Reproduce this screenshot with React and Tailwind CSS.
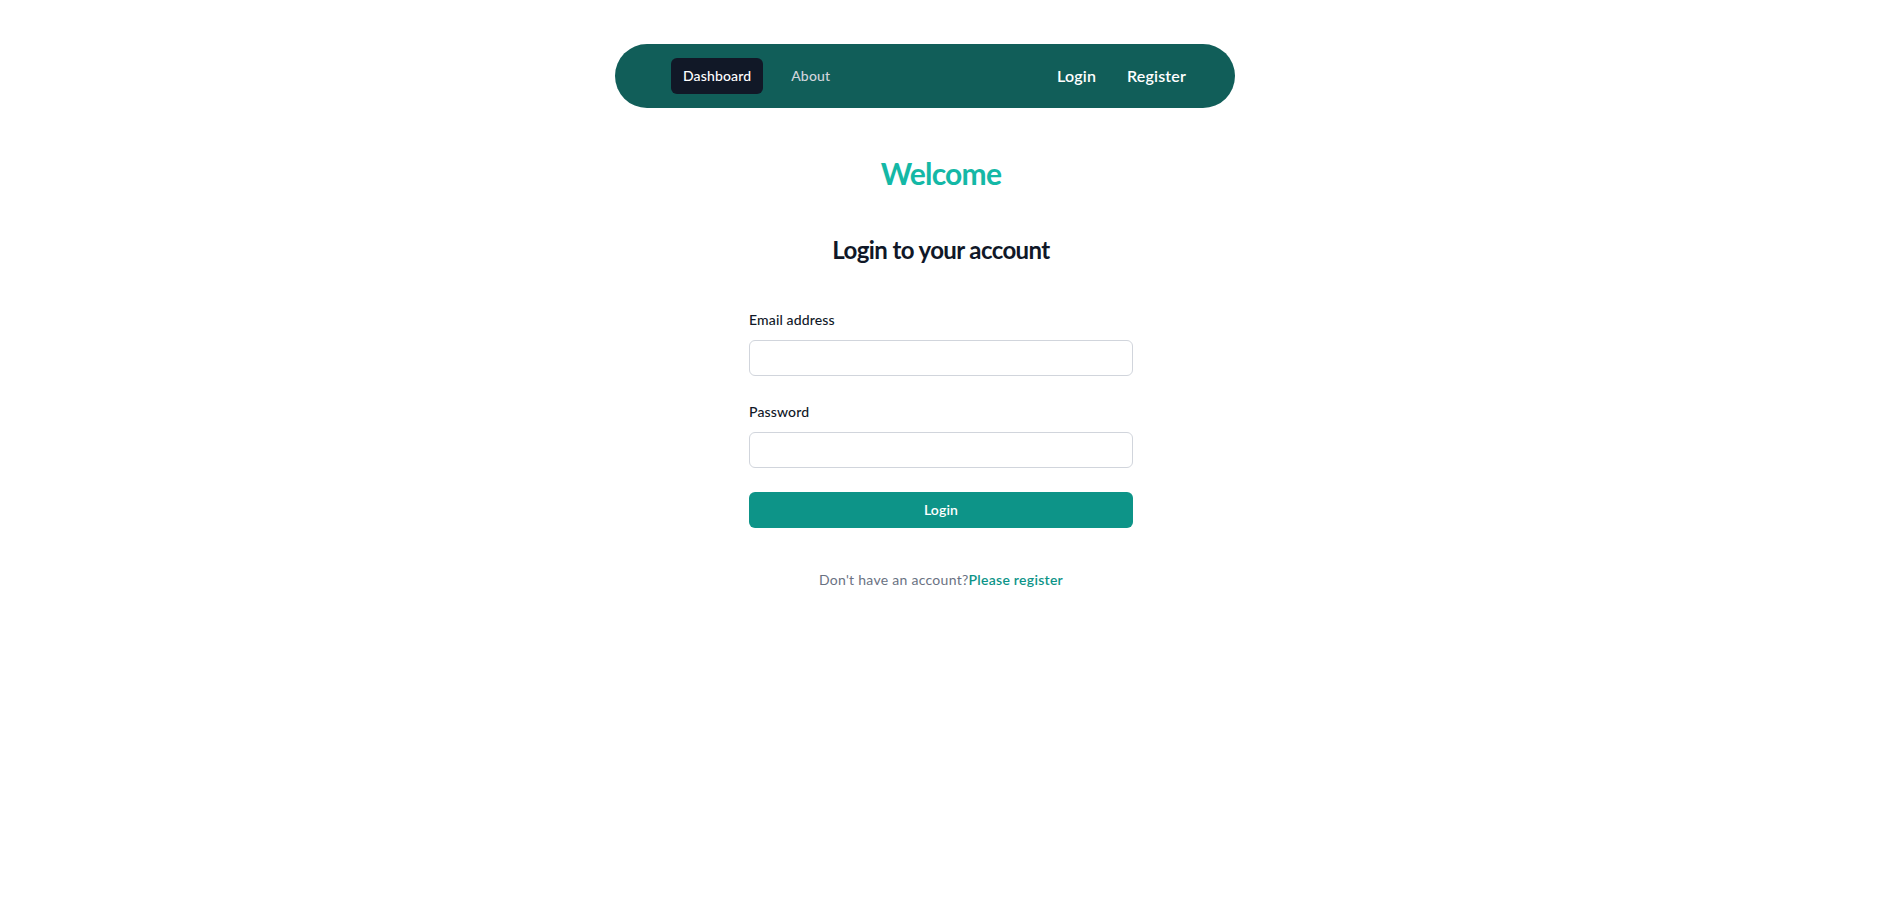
export default function App() {
  return (
    <div className="min-h-screen bg-white font-['Lato','Noto_Sans',sans-serif]">
      <div className="pt-[44px]">
        <nav className="ml-[615px] flex h-16 w-[620px] items-center justify-between rounded-full bg-[#115e59] pl-[56px] pr-[49px]">
          <div className="flex items-center gap-4">
            <a className="rounded-md bg-[#111827] px-3 py-2 text-sm font-medium leading-5 tracking-[0.01em] text-white">Dashboard</a>
            <a className="rounded-md px-3 py-2 text-sm font-medium leading-5 tracking-[0.01em] text-gray-300">About</a>
          </div>
          <div className="flex items-center gap-[31px]">
            <a className="text-base font-semibold tracking-[0.01em] text-white">Login</a>
            <a className="text-base font-semibold tracking-[0.01em] text-white">Register</a>
          </div>
        </nav>
      </div>
      <main className="pr-[5px]">
        <h1 className="mt-[47px] text-center text-3xl font-bold leading-9 tracking-tight text-[#14b8a6]">Welcome</h1>
        <h2 className="mt-[41px] text-center text-2xl font-bold leading-9 tracking-tight text-gray-900">
          Login to your account
        </h2>
        <div className="mx-auto mt-10 w-full max-w-sm">
          <form className="space-y-6" onSubmit={(e) => e.preventDefault()}>
            <div>
              <label className="block text-sm font-medium leading-6 tracking-[0.01em] text-gray-900">Email address</label>
              <div className="mt-2">
                <input
                  type="email"
                  className="block h-9 w-full rounded-md bg-white px-3 py-1.5 text-base text-gray-900 outline-1 -outline-offset-1 outline-gray-300"
                />
              </div>
            </div>
            <div>
              <label className="block text-sm font-medium leading-6 tracking-[0.01em] text-gray-900">Password</label>
              <div className="mt-2">
                <input
                  type="password"
                  className="block h-9 w-full rounded-md bg-white px-3 py-1.5 text-base text-gray-900 outline-1 -outline-offset-1 outline-gray-300"
                />
              </div>
            </div>
            <div>
              <button
                type="submit"
                className="flex h-9 w-full items-center justify-center rounded-md bg-[#0d9488] px-3 text-sm font-semibold leading-6 tracking-[0.01em] text-white"
              >
                Login
              </button>
            </div>
          </form>
          <p className="mt-10 text-center text-sm leading-6 tracking-[0.02em] text-gray-500">
            Don't have an account?
            <a className="font-semibold text-[#0d9488]">Please register</a>
          </p>
        </div>
      </main>
    </div>
  );
}
